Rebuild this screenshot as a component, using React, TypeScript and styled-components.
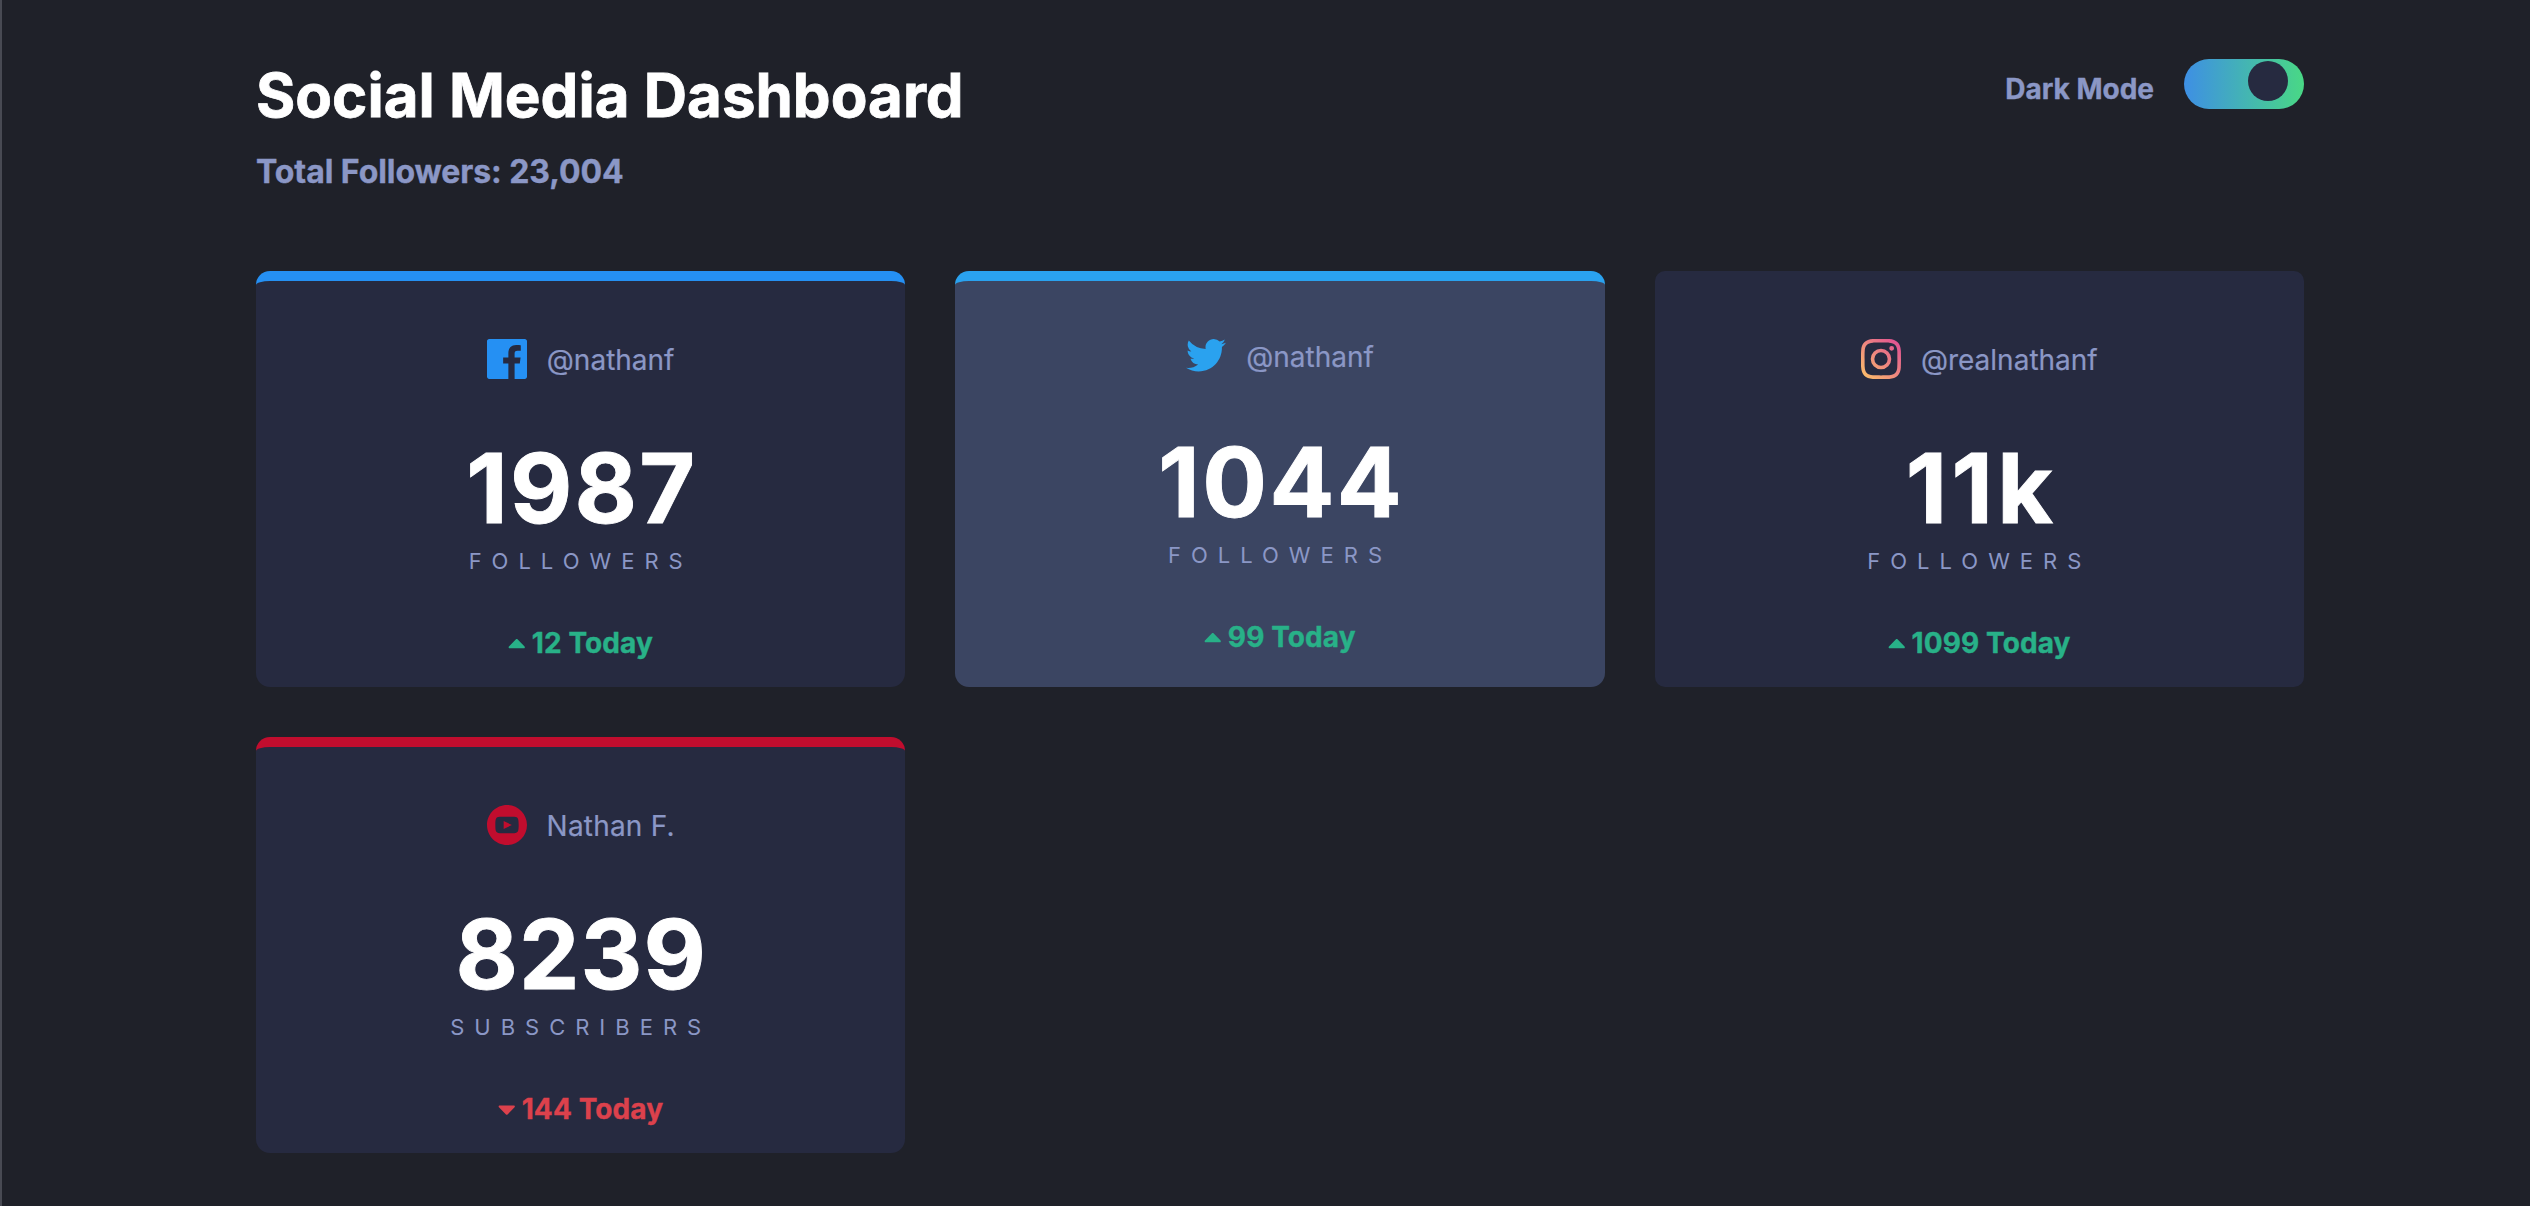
import React, { useState } from "react";
import styled, { createGlobalStyle } from "styled-components";

const GlobalStyle = createGlobalStyle`
  *, *::before, *::after { box-sizing: border-box; }
  html, body { margin: 0; padding: 0; }
  body {
    background: #1f2129;
    font-family: Inter, "Liberation Sans", sans-serif;
    overflow: hidden;
  }
  h1, h2, p { margin: 0; }
`;

const Page = styled.div`
  min-height: 1206px;
  border-left: 2px solid #484a53;
  padding: 59px 226px 0 254px;
`;

const Header = styled.header`
  display: flex;
  justify-content: space-between;
  align-items: flex-start;
  height: 212px;
`;

const Title = styled.h1`
  color: #fff;
  font-size: 60px;
  font-weight: 700;
  line-height: 73px;
  -webkit-text-stroke: 0.8px currentColor;
`;

const Total = styled.h2`
  color: #8b97c6;
  font-size: 32px;
  font-weight: 700;
  line-height: 39px;
  letter-spacing: -0.06px;
  margin-top: 20px;
  -webkit-text-stroke: 0.4px currentColor;
`;

const ModeSwitch = styled.div`
  display: flex;
  align-items: flex-start;
  gap: 30px;
`;

const ModeLabel = styled.span`
  color: #8b97c6;
  font-size: 28px;
  font-weight: 700;
  line-height: 34px;
  margin-top: 13px;
  -webkit-text-stroke: 0.4px currentColor;
`;

const Track = styled.button<{ $on: boolean }>`
  display: flex;
  justify-content: ${(p) => (p.$on ? "flex-end" : "flex-start")};
  width: 120px;
  height: 50px;
  padding: 2px 16px;
  border: 0;
  border-radius: 25px;
  background: linear-gradient(90deg, #3e8fe4, #49d885);
  cursor: pointer;
`;

const Knob = styled.span`
  width: 40px;
  height: 40px;
  border-radius: 50%;
  background: #262a40;
`;

const Grid = styled.main`
  display: grid;
  grid-template-columns: repeat(3, 1fr);
  grid-auto-rows: 416px;
  gap: 50px;
`;

const Card = styled.section<{ $accent?: string; $active?: boolean }>`
  display: flex;
  flex-direction: column;
  align-items: center;
  border-radius: ${(p) => (p.$accent ? 14 : 10)}px;
  border-top: ${(p) => (p.$accent ? `10px solid ${p.$accent}` : "0")};
  padding-top: ${(p) => (p.$accent ? 58 : 68)}px;
  background: ${(p) => (p.$active ? "#3b4562" : "#262a40")};
`;

const Account = styled.div`
  display: flex;
  align-items: flex-start;
  gap: 20px;
  margin-bottom: 51px;
  svg { display: block; }
`;

const Handle = styled.span<{ $tracking?: number }>`
  align-self: center;
  margin: 1px 0 -1px;
  color: #8b97c6;
  font-size: 28px;
  line-height: 34px;
  letter-spacing: ${(p) => p.$tracking ?? 0}px;
  -webkit-text-stroke: 0.2px currentColor;
`;

const Count = styled.p<{ $tracking: number }>`
  color: #fff;
  font-size: 96px;
  font-weight: 700;
  line-height: 116px;
  letter-spacing: ${(p) => p.$tracking}px;
  margin-right: ${(p) => -p.$tracking}px;
  -webkit-text-stroke: 0.9px currentColor;
`;

const Unit = styled.p`
  margin-top: 1px;
  color: #8b97c6;
  font-size: 22px;
  line-height: 28px;
  letter-spacing: 10px;
  text-transform: uppercase;
`;

const Change = styled.p<{ $down?: boolean }>`
  display: flex;
  align-items: center;
  gap: 6px;
  margin-top: 51px;
  color: ${(p) => (p.$down ? "#dc414c" : "#28b188")};
  font-size: 28px;
  font-weight: 700;
  line-height: 34px;
  letter-spacing: 0.1px;
  -webkit-text-stroke: 0.4px currentColor;
`;

const CaretSvg = styled.svg`
  width: 17.5px;
  height: 28px;
  display: block;
  fill: currentColor;
`;

const Caret = ({ down }: { down?: boolean }) => (
  <CaretSvg viewBox="0 0 320 512">
    <path
      d={
        down
          ? "M31.3 192h257.3c17.8 0 26.7 21.5 14.1 34.1L174.1 354.8c-7.8 7.8-20.5 7.8-28.3 0L17.2 226.1C4.6 213.5 13.5 192 31.3 192z"
          : "M288.662 352H31.338c-17.818 0-26.741-21.543-14.142-34.142l128.662-128.662c7.81-7.81 20.474-7.81 28.284 0l128.662 128.662c12.6 12.599 3.676 34.142-14.142 34.142z"
      }
    />
  </CaretSvg>
);

const FacebookIcon = () => (
  <svg width="40" height="40" viewBox="0 0 20 20">
    <path
      fill="#2590f3"
      d="M18.896 0H1.104C.494 0 0 .494 0 1.104v17.793C0 19.506.494 20 1.104 20h9.58v-7.745H8.076V9.237h2.606V7.01c0-2.583 1.578-3.99 3.883-3.99 1.104 0 2.052.082 2.329.119v2.7h-1.598c-1.254 0-1.496.597-1.496 1.47v1.928h2.989l-.39 3.018h-2.6V20h5.098c.608 0 1.102-.494 1.102-1.104V1.104C20 .494 19.506 0 18.896 0z"
    />
  </svg>
);

const TwitterIcon = () => (
  <svg width="40" height="34" viewBox="0 0 20 17">
    <path
      fill="#2aa2ef"
      d="M20 1.924a8.192 8.192 0 01-2.357.646A4.11 4.11 0 0019.448.3a8.22 8.22 0 01-2.606.996A4.096 4.096 0 0013.847 0c-2.65 0-4.596 2.472-3.998 5.037A11.648 11.648 0 011.392.751a4.109 4.109 0 001.27 5.478 4.086 4.086 0 01-1.858-.513c-.045 1.9 1.318 3.679 3.291 4.075a4.113 4.113 0 01-1.853.07 4.106 4.106 0 003.833 2.849A8.25 8.25 0 010 14.409a11.616 11.616 0 006.29 1.843c7.618 0 11.922-6.434 11.662-12.205A8.354 8.354 0 0020 1.924z"
    />
  </svg>
);

const InstagramIcon = () => (
  <svg width="40" height="40" viewBox="0 0 20 20">
    <defs>
      <linearGradient id="ig" x1="0" y1="1" x2="1" y2="0">
        <stop offset="0" stopColor="#fdc468" />
        <stop offset="1" stopColor="#df4996" />
      </linearGradient>
    </defs>
    <path
      fill="url(#ig)"
      d="M10 1.802c2.67 0 2.987.01 4.042.059 2.71.123 3.975 1.409 4.099 4.099.048 1.054.057 1.37.057 4.04 0 2.672-.01 2.988-.057 4.042-.124 2.687-1.387 3.975-4.1 4.099-1.054.048-1.37.058-4.041.058-2.67 0-2.987-.01-4.04-.058-2.718-.124-3.977-1.416-4.1-4.1-.048-1.054-.058-1.37-.058-4.041 0-2.67.01-2.986.058-4.04.124-2.69 1.387-3.977 4.1-4.1 1.054-.048 1.37-.058 4.04-.058zM10 0C7.284 0 6.944.012 5.877.06 2.246.227.227 2.242.061 5.877.01 6.944 0 7.284 0 10s.012 3.057.06 4.123c.167 3.632 2.182 5.65 5.817 5.817 1.067.048 1.407.06 4.123.06s3.057-.012 4.123-.06c3.629-.167 5.652-2.182 5.816-5.817.05-1.066.061-1.407.061-4.123s-.012-3.056-.06-4.122C19.777 2.249 17.76.228 14.124.06 13.057.01 12.716 0 10 0zm0 4.865a5.135 5.135 0 100 10.27 5.135 5.135 0 000-10.27zm0 8.468a3.333 3.333 0 110-6.666 3.333 3.333 0 010 6.666zm5.338-9.87a1.2 1.2 0 100 2.4 1.2 1.2 0 000-2.4z"
    />
  </svg>
);

const YoutubeIcon = () => (
  <svg width="40" height="40" viewBox="0 0 24 24">
    <path
      fill="#c10d2e"
      d="M12 0C5.373 0 0 5.373 0 12s5.373 12 12 12 12-5.373 12-12S18.627 0 12 0zm4.441 16.892c-2.102.144-6.784.144-8.883 0C5.282 16.736 5.017 15.622 5 12c.017-3.629.285-4.736 2.558-4.892 2.099-.144 6.782-.144 8.883 0C18.718 7.264 18.982 8.378 19 12c-.018 3.629-.285 4.736-2.559 4.892zM10 9.658l4.917 2.338L10 14.342V9.658z"
    />
  </svg>
);

type Stat = {
  icon: React.ReactNode;
  handle: string;
  handleTracking?: number;
  count: string;
  countTracking: number;
  unit: string;
  today: string;
  accent?: string;
  active?: boolean;
  down?: boolean;
};

const stats: Stat[] = [
  { icon: <FacebookIcon />, handle: "@nathanf", count: "1987", countTracking: 2.2, unit: "Followers", today: "12 Today", accent: "#2590f3" },
  { icon: <TwitterIcon />, handle: "@nathanf", count: "1044", countTracking: 2.5, unit: "Followers", today: "99 Today", accent: "#2aa2ef", active: true },
  { icon: <InstagramIcon />, handle: "@realnathanf", count: "11k", countTracking: 4.4, unit: "Followers", today: "1099 Today" },
  { icon: <YoutubeIcon />, handle: "Nathan F.", handleTracking: 0.2, count: "8239", countTracking: 1.1, unit: "Subscribers", today: "144 Today", accent: "#c10d2e", down: true },
];

export default function App() {
  const [dark, setDark] = useState(true);
  return (
    <>
      <GlobalStyle />
      <Page>
        <Header>
          <div>
            <Title>Social Media Dashboard</Title>
            <Total>Total Followers: 23,004</Total>
          </div>
          <ModeSwitch>
            <ModeLabel>Dark Mode</ModeLabel>
            <Track $on={dark} onClick={() => setDark(!dark)}>
              <Knob />
            </Track>
          </ModeSwitch>
        </Header>
        <Grid>
          {stats.map((s) => (
            <Card key={s.handle + s.count} $accent={s.accent} $active={s.active}>
              <Account>
                {s.icon}
                <Handle $tracking={s.handleTracking}>{s.handle}</Handle>
              </Account>
              <Count $tracking={s.countTracking}>{s.count}</Count>
              <Unit>{s.unit}</Unit>
              <Change $down={s.down}>
                <Caret down={s.down} />
                {s.today}
              </Change>
            </Card>
          ))}
        </Grid>
      </Page>
    </>
  );
}
